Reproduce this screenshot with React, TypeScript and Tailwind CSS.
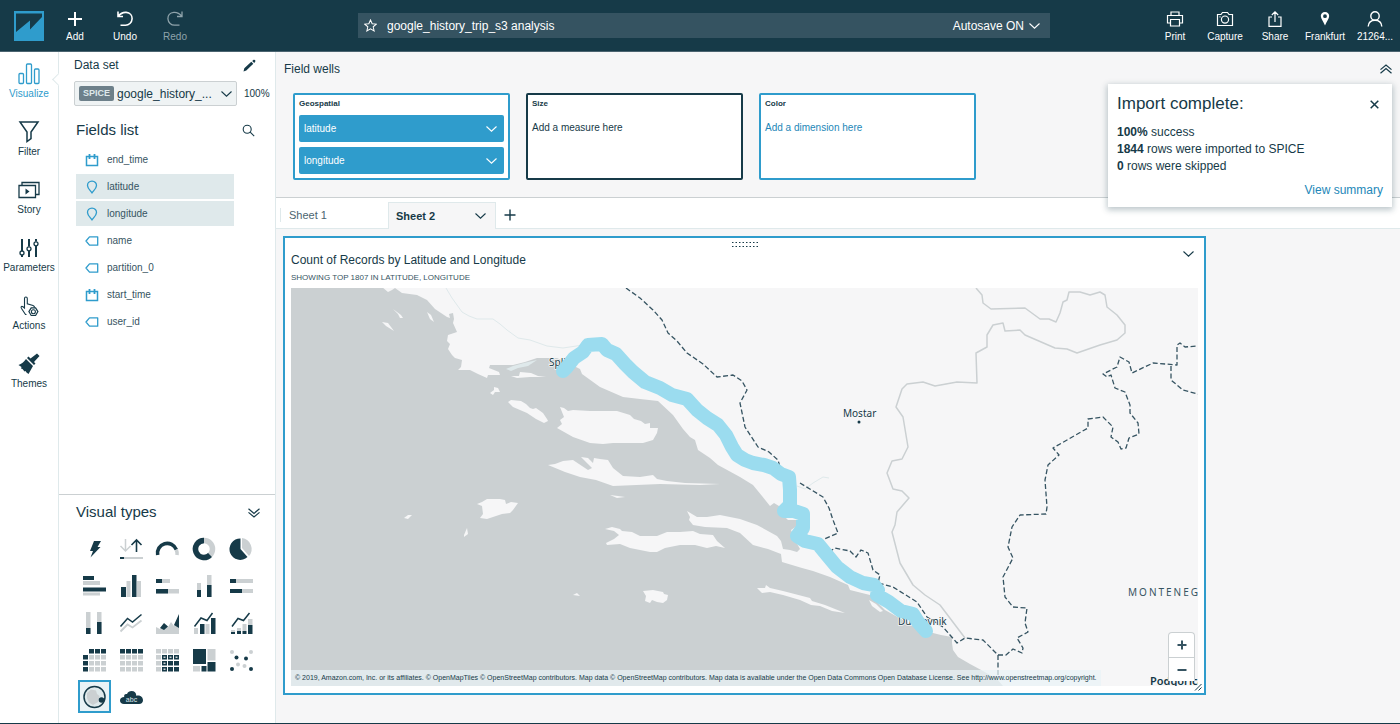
import type { ReactNode } from "react";

const DARK = "#163a48";
const LIGHT = "#cbd0d2";
const BLUE = "#2f9ccc";

type ChevronProps = { className?: string };

function Chevron({ className = "h-[6px] w-[11px]" }: ChevronProps) {
  return (
    <svg viewBox="0 0 11 6" className={className} fill="none" stroke="currentColor" strokeWidth="1.1" aria-hidden="true">
      <path d="M.5 .5 5.5 5.2 10.5 .5" />
    </svg>
  );
}

function DoubleChevron({ className = "" }: ChevronProps) {
  return (
    <svg viewBox="0 0 12 10" className={`h-[10px] w-[12px] ${className}`} fill="none" stroke="currentColor" strokeWidth="1.2" aria-hidden="true">
      <path d="M.5 .8 6 5.4 11.5 .8M.5 4.4 6 9 11.5 4.4" />
    </svg>
  );
}

/* ---------- header ---------- */

type HeaderButtonProps = { label: string; muted?: boolean; children: ReactNode };

function HeaderButton({ label, muted = false, children }: HeaderButtonProps) {
  return (
    <button
      type="button"
      className={`flex h-full w-[50px] flex-col items-center justify-center gap-[2px] pt-[3px] text-[10px] leading-[14px] ${muted ? "text-[#8fa3ab]" : "text-white"}`}
    >
      <svg viewBox="0 0 18 18" className="h-[18px] w-[18px]" fill="none" stroke="currentColor" strokeWidth="1.2" aria-hidden="true">
        {children}
      </svg>
      {label}
    </button>
  );
}

function Header() {
  return (
    <header className="grid h-[52px] shrink-0 grid-cols-[minmax(0,1fr)_692px_350px] items-center border-b border-[#4b6470] bg-[#163a48] text-white">
      <div className="flex h-full items-center">
        <svg viewBox="0 0 30 30" className="ml-[14px] mr-[6px] h-[30px] w-[30px]" role="img" aria-label="QuickSight">
          <rect width="30" height="30" fill={BLUE} />
          <path d="M2 2.5H28V6L16 18.5V9.5L2 21Z" fill={DARK} />
        </svg>
        <HeaderButton label="Add">
          <path d="M9 2V16M2 9H16" strokeWidth="2" />
        </HeaderButton>
        <HeaderButton label="Undo">
          <path d="M2 1.500V6.500H7M2.300 6.200C4.800 3 7.500 2.200 10.200 2.400C14 2.700 16.300 5.500 16.100 8.800C15.900 12.800 12.700 15.200 9.500 15.200H4.500" strokeWidth="1.600" />
        </HeaderButton>
        <HeaderButton label="Redo" muted>
          <path d="M16 1.500V6.500H11M15.700 6.200C13.200 3 10.500 2.200 7.800 2.400C4 2.700 1.700 5.500 1.900 8.800C2.100 12.800 5.300 15.200 8.500 15.200H13.500" strokeWidth="1.300" />
        </HeaderButton>
      </div>

      <div className="flex h-[25px] items-center bg-[#355361] px-[6px] text-[12px]">
        <button type="button" aria-label="Favorite">
          <svg viewBox="0 0 14 14" className="h-[13px] w-[13px]" fill="none" stroke="currentColor" strokeWidth="1.1" aria-hidden="true">
            <path d="M7 1 8.8 5.1 13.2 5.5 9.9 8.4 10.9 12.8 7 10.5 3.1 12.8 4.1 8.4 .8 5.5 5.2 5.1Z" />
          </svg>
        </button>
        <h1 className="ml-[10px] flex-1 truncate">google_history_trip_s3 analysis</h1>
        <button type="button" className="mr-[4px] flex items-center gap-[5px]">
          Autosave ON
          <Chevron />
        </button>
      </div>

      <div className="flex h-full justify-end">
        <HeaderButton label="Print">
          <path d="M5 5V2H13V5M4 13H1.5V5.5H16.5V13H14M4.5 9.5H13.5V16H4.5Z" />
        </HeaderButton>
        <HeaderButton label="Capture">
          <path d="M1.5 4.5H5L6.5 2.5H11.5L13 4.5H16.5V15.5H1.5Z" />
          <circle cx="9" cy="9.6" r="3.6" />
          <path d="M3.5 6.8H4.5" />
        </HeaderButton>
        <HeaderButton label="Share">
          <path d="M6 7H3V16.3H15V7H12M9 12V2M5.8 5 9 1.8 12.2 5" />
        </HeaderButton>
        <HeaderButton label="Frankfurt">
          <path d="M9 2C6.4 2 4.8 3.8 4.8 6C4.8 8.5 7.5 11.5 9 15.6C10.500 11.5 13.200 8.5 13.200 6C13.200 3.800 11.600 2 9 2ZM9 4.300A1.900 1.900 0 1 1 9 8.100A1.900 1.900 0 1 1 9 4.300Z" fill="currentColor" fillRule="evenodd" stroke="none" />
        </HeaderButton>
        <HeaderButton label="21264...">
          <circle cx="9" cy="6" r="4.200" strokeWidth="1.4" />
          <path d="M2.200 16.500C2.500 12.500 5 10.300 9 10.300S15.500 12.500 15.800 16.500" strokeWidth="1.4" />
        </HeaderButton>
      </div>
    </header>
  );
}

/* ---------- navigation rail ---------- */

const NAV: { label: string; icon: ReactNode }[] = [
  {
    label: "Visualize",
    icon: (
      <>
        <rect x="2" y="11.500" width="4.500" height="10" rx="1" />
        <rect x="9.500" y="2" width="5" height="19.500" rx="1" />
        <rect x="17.500" y="7" width="4.500" height="14.500" rx="1" />
      </>
    ),
  },
  { label: "Filter", icon: <path d="M3 2H21L14 12V18.500L10 21.500V12Z" strokeWidth="1.5" /> },
  {
    label: "Story",
    icon: (
      <>
        <path d="M2 7.500H18.500V19.500H2ZM5 7V4.500H22V16.500H19" />
        <path d="M8.500 10.500 12.500 13.500 8.500 16.500Z" fill="currentColor" stroke="none" />
      </>
    ),
  },
  {
    label: "Parameters",
    icon: (
      <>
        <path d="M5 3V15M5 19V21M12 3V10.500M12 15V21M19 3V5.500M19 10V21" strokeWidth="2" />
        <circle cx="5" cy="17" r="2" />
        <circle cx="12" cy="12.800" r="2" />
        <circle cx="19" cy="7.800" r="2" />
      </>
    ),
  },
  {
    label: "Actions",
    icon: (
      <>
        <path d="M9.500 20.500H8.500L4.500 14.500C3.500 12.900 4.500 11.800 6 12.800L7.500 14V4.500C7.500 2.500 10.300 2.500 10.300 4.500V9.800L16 11.500C17.200 12 17.600 12.500 17.600 13.500" strokeWidth="1.100" />
        <path d="M14.200 13.900H18.600L20.900 17.600 18.600 21.500H14.200L11.900 17.600Z" strokeWidth="1.200" />
        <circle cx="16.400" cy="17.700" r="2" strokeWidth="1.100" />
      </>
    ),
  },
  {
    label: "Themes",
    icon: (
      <g fill="currentColor" stroke="none">
        <path d="M20 1.500 22.500 4 17 10 18.500 11.500 17 13 10 6 11.500 4.500 13.500 6.500Z" />
        <path d="M9 7 16 14C14.500 16.500 13 19.500 11.500 22L9.500 20.500 8.500 19 7.500 19.500 5.500 17 4 16.500 4.500 15 1.500 13C4.500 11.800 7 10 9 7Z" />
      </g>
    ),
  },
];

function NavRail() {
  return (
    <nav className="flex w-[59px] shrink-0 flex-col border-r border-[#dfe9eb] bg-white pt-[6px]">
      {NAV.map((item, index) => (
        <button
          key={item.label}
          type="button"
          className={`relative flex h-[58px] flex-col items-center pt-[4px] text-[10px] leading-[14px] ${index === 0 ? "text-[#2f9ccc]" : "text-[#163a48]"}`}
        >
          <svg viewBox="0 0 24 24" className="mb-[1px] h-[24px] w-[24px]" fill="none" stroke="currentColor" strokeWidth="1.300" aria-hidden="true">
            {item.icon}
          </svg>
          {item.label}
          {index === 0 && (
            <span className="absolute -right-[5px] top-[17px] h-[9px] w-[9px] rotate-45 border-b border-l border-[#dfe9eb] bg-white" />
          )}
        </button>
      ))}
    </nav>
  );
}

/* ---------- data panel ---------- */

type FieldKind = "date" | "geo" | "text";

const FIELDS: { name: string; kind: FieldKind }[] = [
  { name: "end_time", kind: "date" },
  { name: "latitude", kind: "geo" },
  { name: "longitude", kind: "geo" },
  { name: "name", kind: "text" },
  { name: "partition_0", kind: "text" },
  { name: "start_time", kind: "date" },
  { name: "user_id", kind: "text" },
];

function FieldIcon({ kind }: { kind: FieldKind }) {
  return (
    <svg viewBox="0 0 14 14" className="h-[14px] w-[14px]" fill="none" stroke={BLUE} strokeWidth="1.300" aria-hidden="true">
      {kind === "date" && (
        <>
          <path d="M1.500 3.500H12.500V12.500H1.500Z" strokeWidth="1.500" />
          <path d="M4.500 1V6M9.500 1V6" strokeWidth="1.800" />
        </>
      )}
      {kind === "geo" && <path d="M7 1.200C4 1.200 2.500 3.300 2.500 5.400C2.500 8 4.600 9.600 7 12.800C9.400 9.600 11.500 8 11.500 5.400C11.500 3.300 10 1.200 7 1.200Z" />}
      {kind === "text" && <path d="M4.500 2.800H12.700V11.200H4.500L1 7Z" strokeLinejoin="round" />}
    </svg>
  );
}

type Block = [x: number, y: number, w: number, h: number, dark?: boolean];

function Blocks({ items }: { items: Block[] }) {
  return (
    <>
      {items.map(([x, y, w, h, dark], i) => (
        <rect key={i} x={x} y={y} width={w} height={h} fill={dark ? DARK : LIGHT} />
      ))}
    </>
  );
}

function Matrix({ isDark }: { isDark: (row: number, col: number) => boolean | null }) {
  const cells: Block[] = [];
  for (let row = 0; row < 4; row++) {
    for (let col = 0; col < 4; col++) {
      const dark = isDark(row, col);
      if (dark !== null) cells.push([1 + col * 6, 1 + row * 6, 5, 4.500, dark]);
    }
  }
  return <Blocks items={cells} />;
}

const VISUALS: { name: string; icon: ReactNode }[] = [
  { name: "AutoGraph", icon: <path d="M12 4H19L15.500 10H18.500L8.500 20.500 11 14H8Z" fill={DARK} /> },
  {
    name: "KPI",
    icon: (
      <>
        <path d="M6.500 2V14M1.500 9 6.500 14 11.500 9" stroke={LIGHT} strokeWidth="1.500" fill="none" />
        <path d="M17.500 15V3M12.500 8 17.500 3 22.500 8" stroke={DARK} strokeWidth="1.600" fill="none" />
        <Blocks items={[[1, 20, 23, 2], [1, 20, 4, 2, true]]} />
      </>
    ),
  },
  {
    name: "Gauge",
    icon: (
      <g fill="none" strokeWidth="3.600">
        <path d="M2.700 18A9.700 9.700 0 0 1 21.300 12.700" stroke={DARK} />
        <path d="M21.300 12.700A9.700 9.700 0 0 1 22 18" stroke={LIGHT} />
      </g>
    ),
  },
  {
    name: "Donut chart",
    icon: (
      <g fill="none" strokeWidth="5.500">
        <circle cx="12" cy="12" r="8.500" stroke={LIGHT} />
        <path d="M12 3.500A8.500 8.500 0 1 0 18 18" stroke={DARK} />
      </g>
    ),
  },
  {
    name: "Pie chart",
    icon: (
      <>
        <path d="M13 11V1A11 11 0 0 1 20 19Z" fill={LIGHT} />
        <path d="M11.500 1.500A10.700 10.700 0 1 0 18.500 20L11.500 12Z" fill={DARK} />
      </>
    ),
  },
  { name: "Horizontal bar", icon: <Blocks items={[[1, 2, 11, 4, true], [1, 7, 17, 4], [1, 13.500, 23, 4, true], [1, 18.500, 17, 3]]} /> },
  { name: "Vertical bar", icon: <Blocks items={[[2, 13, 5, 10, true], [7.500, 7, 4, 16], [13, 1, 4.500, 22, true], [18, 7, 4, 16]]} /> },
  { name: "Stacked horizontal", icon: <Blocks items={[[1, 5, 14, 4], [1, 5, 6, 4, true], [1, 15, 23, 4.500], [1, 15, 12, 4.500, true]]} /> },
  { name: "Stacked vertical", icon: <Blocks items={[[5, 9, 4, 14], [5, 16, 4, 7, true], [15, 1, 4.500, 22], [15, 11, 4.500, 12, true]]} /> },
  { name: "Full horizontal", icon: <Blocks items={[[1, 5, 23, 4], [1, 5, 6, 4, true], [1, 15, 23, 4], [1, 15, 12, 4, true]]} /> },
  { name: "Full vertical", icon: <Blocks items={[[4, 1, 4.500, 22], [4, 17, 4.500, 6, true], [15, 1, 4.500, 22], [15, 11, 4.500, 12, true]]} /> },
  {
    name: "Line chart",
    icon: (
      <g fill="none" strokeWidth="1.500">
        <path d="M1.500 20.500 8.500 13.500 13.500 16.500 22.500 9.500" stroke={LIGHT} strokeWidth="1.800" />
        <path d="M1.500 15.500 8.500 7.500 13.500 11 22.500 3.500" stroke={DARK} />
      </g>
    ),
  },
  {
    name: "Area chart",
    icon: (
      <>
        <path d="M1 23V16L5 18 9 14 13 16 16 11 19 15 24 5V23Z" fill={LIGHT} />
        <path d="M5 17 9 12 13 15.500 9 19ZM19 14 24 3V17Z" fill={DARK} />
      </>
    ),
  },
  {
    name: "Clustered combo",
    icon: (
      <>
        <Blocks items={[[2, 17, 4, 6], [8, 13, 4.500, 10, true], [13.500, 13, 4, 10], [19, 7, 4.500, 16, true]]} />
        <path d="M2.500 15.500 9 7 15 9.500 20.500 2" stroke={DARK} strokeWidth="1.500" fill="none" />
      </>
    ),
  },
  {
    name: "Stacked combo",
    icon: (
      <>
        <Blocks items={[[2, 19, 4, 2], [2, 21, 4, 2, true], [8, 17, 4, 3], [8, 20, 4, 3, true], [13.500, 13, 4, 7], [13.500, 20, 4, 3, true], [19, 8, 4.500, 6], [19, 14, 4.500, 9, true]]} />
        <path d="M3 15.500 9 7.500 14.500 9.500 20.500 2" stroke={DARK} strokeWidth="1.500" fill="none" />
      </>
    ),
  },
  { name: "Pivot table", icon: <Matrix isDark={(r, c) => (r === 0 && c === 0 ? null : r === 0 || c === 0)} /> },
  { name: "Table", icon: <Matrix isDark={(r) => r === 0} /> },
  {
    name: "Heat map",
    icon: (
      <>
        <Matrix isDark={(r, c) => r > 0 && c > 0} />
        {[[7, 7], [13, 7], [19, 7], [7, 13], [7, 19]].map(([x, y]) => (
          <rect key={`${x}-${y}`} x={x + 1.500} y={y + 1.500} width="2" height="1.500" fill={LIGHT} />
        ))}
      </>
    ),
  },
  { name: "Tree map", icon: <Blocks items={[[1, 1, 13, 15, true], [15.500, 1, 8, 11.500], [15.500, 14, 8, 9.500, true], [1, 18, 7, 5.500], [9.500, 18, 5, 5.500, true]]} /> },
  {
    name: "Scatter plot",
    icon: (
      <>
        {[[3, 4], [22, 4], [9, 16.500], [15.500, 18]].map(([x, y]) => (
          <circle key={`${x}-${y}`} cx={x} cy={y} r="2" fill={LIGHT} />
        ))}
        {[[7.500, 9.500], [17, 10.500], [3, 21], [22, 21]].map(([x, y]) => (
          <circle key={`${x}-${y}`} cx={x} cy={y} r="2" fill={DARK} />
        ))}
      </>
    ),
  },
  {
    name: "Points on map",
    icon: (
      <>
        <circle cx="12.500" cy="12" r="10.500" fill="#dfe9eb" stroke={DARK} strokeWidth="1.500" />
        <path d="M5 8 9 4.500 14 5.500 15 9 17.500 11 16 17 11 20 7 17.500 5 13Z" fill={LIGHT} />
        <circle cx="19.500" cy="15" r="2.800" fill={DARK} />
      </>
    ),
  },
  {
    name: "Word cloud",
    icon: (
      <>
        <path d="M5 19C2.500 19 1 17.500 1 15.500C1 13.300 2.800 12 5.200 12C4.800 9.600 6 8.500 8 9C9 6.800 10.500 6 12.500 6C15.500 6 17.300 7.800 17.300 10.800C21 9.500 24 12 24 15.200C24 17.500 22.500 19 20 19Z" fill={DARK} />
        <text x="12.500" y="17" textAnchor="middle" fontSize="7" fill="#dfe9eb">
          abc
        </text>
      </>
    ),
  },
];

function DataPanel() {
  return (
    <aside className="flex w-[217px] shrink-0 flex-col border-r border-[#dfe9eb] bg-white">
      <div className="flex h-[26px] items-center justify-between pl-[15px] pr-[19px] text-[12px]">
        <label htmlFor="dataset">Data set</label>
        <button type="button" aria-label="Edit data set">
          <svg viewBox="0 0 13 13" className="h-[13px] w-[13px]" fill={DARK} aria-hidden="true">
            <path d="M.5 12.500 1.300 9.200 8.300 2.800 10.300 4.800 3.300 11.600ZM9.200 2 10.600 .800Q11.300 .400 12 1.100Q12.600 1.900 12.200 2.700L11.200 4Z" />
          </svg>
        </button>
      </div>

      <div className="mt-[3px] flex items-center pl-[15px]">
        <div className="relative flex h-[25px] w-[163px] items-center rounded-xs border border-[#cbd0d2] bg-[#eff3f4] pl-[4px]">
          <span className="flex h-[15px] w-[35px] items-center justify-center rounded-xs bg-[#6d808a] text-[9px] font-bold text-[#dfe9eb]">SPICE</span>
          <select id="dataset" className="ml-[3px] min-w-0 flex-1 appearance-none bg-transparent text-[12px] outline-none">
            <option>google_history_...</option>
          </select>
          <Chevron className="pointer-events-none absolute right-[4px] top-[9px] h-[6px] w-[11px]" />
        </div>
        <span className="ml-[7px] text-[10px]">100%</span>
      </div>

      <div className="mt-[14px] flex h-[20px] items-center justify-between pl-[17px] pr-[20px]">
        <h2 className="text-[15px]">Fields list</h2>
        <button type="button" aria-label="Search fields">
          <svg viewBox="0 0 13 13" className="h-[13px] w-[13px]" fill="none" stroke={DARK} strokeWidth="1.100" aria-hidden="true">
            <circle cx="5.200" cy="5.200" r="4" />
            <path d="M8.200 8.200 12.200 12.200" />
          </svg>
        </button>
      </div>

      <ul className="mb-[8px] ml-[17px] mr-[41px] mt-[7px] flex flex-col gap-[2px] text-[10px]">
        {FIELDS.map((field) => (
          <li key={field.name}>
            <button
              type="button"
              className={`flex h-[25px] w-full items-center gap-[8px] pl-[9px] text-[#365462] ${field.kind === "geo" ? "bg-[#dfe9eb]" : ""}`}
            >
              <FieldIcon kind={field.kind} />
              {field.name}
            </button>
          </li>
        ))}
      </ul>

      <section className="mt-auto border-t border-[#cbd0d2] pb-[8px] pl-[17px] pr-[15px]">
        <div className="flex h-[35px] items-center justify-between">
          <h2 className="text-[15px]">Visual types</h2>
          <button type="button" aria-label="Collapse visual types">
            <DoubleChevron />
          </button>
        </div>
        <div className="grid auto-rows-[37px] grid-cols-5 place-items-center">
          {VISUALS.map((visual) => (
            <button
              key={visual.name}
              type="button"
              aria-label={visual.name}
              className={`flex h-[33px] w-[33px] items-center justify-center ${visual.name === "Points on map" ? "border-2 border-[#2f9ccc] bg-[#eaf3f6]" : ""}`}
            >
              <svg viewBox="0 0 25 24" className="h-[24px] w-[25px]" aria-hidden="true">
                {visual.icon}
              </svg>
            </button>
          ))}
        </div>
      </section>
    </aside>
  );
}

/* ---------- field wells and sheets ---------- */

type WellProps = { title: string; border: string; children: ReactNode };

function Well({ title, border, children }: WellProps) {
  return (
    <div className={`h-[87px] w-[217px] rounded-xs border-2 bg-white px-[4px] pt-[4px] ${border}`}>
      <h3 className="text-[8px] font-bold leading-[10px]">{title}</h3>
      {children}
    </div>
  );
}

function FieldWells() {
  return (
    <section className="border-b border-[#cbd0d2] pb-[17px]">
      <div className="flex h-[34px] items-center justify-between pl-[8px] pr-[8px]">
        <h2 className="text-[12px]">Field wells</h2>
        <button type="button" aria-label="Collapse field wells">
          <DoubleChevron className="rotate-180" />
        </button>
      </div>
      <div className="mt-[7px] flex gap-[16px] pl-[17px]">
        <Well title="Geospatial" border="border-[#2f9ccc]">
          <div className="mt-[6px] flex flex-col gap-[5px]">
            {["latitude", "longitude"].map((name) => (
              <button key={name} type="button" className="flex h-[27px] items-center justify-between rounded-xs bg-[#2f9ccc] pl-[5px] pr-[7px] text-[10px] text-white">
                {name}
                <Chevron />
              </button>
            ))}
          </div>
        </Well>
        <Well title="Size" border="border-[#163a48]">
          <p className="mt-[12px] text-[10px] leading-[14px]">Add a measure here</p>
        </Well>
        <Well title="Color" border="border-[#2f9ccc]">
          <p className="mt-[12px] text-[10px] leading-[14px] text-[#2387b8]">Add a dimension here</p>
        </Well>
      </div>
    </section>
  );
}

function SheetTabs() {
  return (
    <div className="flex h-[31px] items-end border-b border-[#dfe9eb] bg-white pl-[4px] text-[11px]">
      <button type="button" className="flex h-[26px] w-[108px] items-center text-[#4b6470]">
        <span className="flex h-[14px] items-center border-l border-[#dfe9eb] pl-[8px]">Sheet 1</span>
      </button>
      <button type="button" className="-mb-px flex h-[27px] w-[108px] items-center justify-between border border-b-0 border-[#dfe9eb] bg-[#f6f6f7] pl-[7px] pr-[9px] font-bold">
        Sheet 2
        <Chevron />
      </button>
      <button type="button" aria-label="Add sheet" className="ml-[1px] flex h-[26px] w-[26px] items-center justify-center">
        <svg viewBox="0 0 12 12" className="h-[12px] w-[12px]" stroke={DARK} strokeWidth="1.400" aria-hidden="true">
          <path d="M6 .5V11.500M.5 6H11.500" />
        </svg>
      </button>
    </div>
  );
}

/* ---------- map ---------- */

const LAND =
  "M382 287 388 292 392 290 395 288 402 293 417 295 427 300 435 309 441 313 447 317 450 318 449 314 453 313 454 319 453 323 457 332 448 335 447 341 450 344 448 349 452 355 455 358 462 360 461 367 458 370 470 370 478 374 487 378 488 375 500 375 499 372 489 368 490 365 513 365 525 362 537 358 557 358 570 364 580 369 582 374 600 387 623 397 640 399 658 401 673 415 683 429 690 437 695 440 698 450 704 454 710 458 718 465 740 477 753 485 762 496 770 506 774 503 779 506 781 513 788 520 797 520 797 526 791 530 795 540 800 549 797 552 790 550 783 549 781 541 777 536 757 525 740 519 720 515 707 517 697 517 687 511 690 517 689 520 693 525 705 527 727 528 740 533 753 545 768 549 781 554 782 562 802 568 813 571 830 577 848 585 850 590 870 595 885 610 903 620 915 627 933 633 941 635 952 637 952 643 953 650 958 657 970 664 983 671 997 679 1003 686 1198 686 1198 288Z";

const ISLANDS = [
  "M560 407 564 408 568 411 573 410 590 411 617 411 630 415 634 419 641 421 645 424 650 423 650 428 658 428 657 433 653 440 643 443 613 443 603 444 590 443 573 437 557 428 562 424 560 420 564 417Z",
  "M548 465 555 464 563 461 573 460 582 466 588 470 592 468 588 464 581 457 588 458 593 463 594 458 600 459 608 460 613 468 623 476 640 477 653 475 657 479 667 481 685 483 720 484 700 485 660 484 613 486 596 480 580 477 565 472Z",
  "M508 402 511 400 521 401 526 404 530 408 533 409 536 408 543 413 547 419 548 421 544 423 536 419 527 413 513 407Z",
  "M490 393 494 390 494 387 498 388 500 392 495 392 493 395Z",
  "M511 376 519 376 520 372 531 373 538 376 546 377 530 377 517 378Z",
  "M477 504 482 502 487 499 500 499 505 500 506 504 511 502 518 503 513 510 510 513 502 514 487 519 480 518 483 514 482 506Z",
  "M605 529 612 527 620 529 622 531 632 532 640 536 657 536 667 532 680 532 693 531 700 534 713 535 717 541 725 548 716 546 707 548 695 545 680 545 665 548 657 552 650 552 640 550 630 548 620 544 607 545 606 543 614 539 619 535 614 531Z",
  "M643 591 653 590 663 592 664 594 668 595 667 600 663 603 657 602 652 600 650 603 645 601 646 596Z",
  "M757 588 765 588 766 585 770 588 783 591 810 598 812 601 825 605 845 613 832 611 820 606 811 605 800 600 783 595 770 592 762 593Z",
  "M393 309 398 314 400 318 403 318 401 315Z",
  "M382 322 388 323 394 331 386 326Z",
  "M427 312 431 315 434 322 430 319Z",
  "M610 495 618 496 625 497 617 498Z",
  "M404 518 408 515 412 515 408 519Z",
  "M464 535 467 528 468 534 464 537Z",
  "M573 595 577 593 580 596Z",
  "M869 600 876 604 883 611 880 612 872 606Z",
];

const ROADS =
  "M976 288 982 295 983 303 991 309 1025 308 1040 319 1049 319 1056 322 1060 313 1063 302 1067 300 1069 292 1080 292 1090 295 1100 292 1105 295 1107 307 1117 315 1125 325 1125 333 1117 340 1100 345 1077 353 1067 349 1055 348 1025 335 1020 330 1005 331 1003 323 993 325 987 335 987 347 976 353 977 383 957 382 935 386 923 382 907 384 902 389 896 407 903 417 908 447 902 459 892 461 887 473 893 489 902 491 909 498 897 512 895 525 892 532 900 563 913 585 925 595 940 605 965 638";

const BORDERS = [
  "M626 288 640 298 653 310 662 320 668 333 677 341 687 353 703 364 717 377 733 375 742 381 747 390 740 403 745 427 758 447 769 452 778 460 780 467",
  "M800 483 823 497 829 508 833 520 838 533 820 541",
  "M829 552 835 548 850 551 856 557 861 550 868 553 873 570 880 575 878 583 893 587 917 602 927 617 943 627 957 643 965 638 983 640 998 655 998 675",
  "M998 655 1006 655 1013 649 1022 653 1023 648 1017 638 1028 632 1025 623 1027 608 1013 607 1005 597 1003 577 1013 558 1008 547 1012 527 1020 515 1046 514 1047 507 1045 480 1048 465 1059 455 1053 448 1088 428 1088 419 1103 417 1113 427 1111 437 1118 442 1121 449 1126 448 1129 438 1139 434 1138 423 1130 413 1130 405 1125 392 1115 388 1111 375 1107 377 1103 374 1117 367 1120 357 1129 362 1132 373 1153 363 1177 365 1177 345 1180 343 1185 347 1198 346",
  "M1171 366 1171 380 1183 390 1198 394",
];

const ROUTE =
  "M563 371 567 367 574 358 583 352 588 345 602 344 607 350 616 354 625 364 633 372 645 382 660 388 672 395 687 399 697 410 707 418 718 425 726 435 732 447 737 455 745 460 753 463 764 465 773 468 781 474 789 477 790 490 790 505 784 511 794 511 803 514 803 528 797 536 805 541 818 544 827 555 837 567 850 577 863 583 874 585 878 590 877 595 889 602 901 611 913 614 918 622 926 631";

function PointsMap() {
  return (
    <div className="relative h-[398px] w-full overflow-hidden">
      <svg viewBox="291 288 907 398" preserveAspectRatio="xMidYMid slice" className="h-full w-full" role="img" aria-label="Points along the Adriatic coast">
        <rect x="291" y="288" width="907" height="398" fill="#cbd0d2" />
        <path d={LAND} fill="#f6f6f7" />
        {ISLANDS.map((d) => (
          <path key={d} d={d} fill="#f6f6f7" />
        ))}
        <path d="M506 369 513 366 524 363 537 360 528 366 518 368 511 371Z" fill="#dfe9eb" />
        <g fill="none" strokeLinejoin="round">
          <path d="M446 288 452 298 457 305 462 312 469 316 477 319 493 319 500 324 507 330 518 338 530 340 547 346 563 348 583 345M797 486 805 489 813 483 823 477 829 478" stroke="#dfe9eb" strokeWidth="1" />
          <path d={ROADS} stroke="#cbd0d2" strokeWidth="1.500" />
          {BORDERS.map((d) => (
            <path key={d} d={d} stroke="#365462" strokeWidth="1.300" strokeDasharray="5 2.500" />
          ))}
        </g>
        <g fill={DARK} stroke="#f6f6f7" strokeWidth="1.500" paintOrder="stroke" fontFamily="'Noto Sans', sans-serif" fontSize="10">
          <text x="549" y="366">Split</text>
          <text x="843" y="417">Mostar</text>
          <text x="898" y="625">Dubrovnik</text>
          <text x="1128" y="596" fill="#365462" className="tracking-[2px]">MONTENEGRO</text>
          <text x="1150" y="685" fontWeight="600" fontSize="11">Podgorica</text>
        </g>
        <circle cx="859" cy="422" r="1.500" fill={DARK} />
        <path d={ROUTE} fill="none" stroke="#9bdcef" strokeWidth="14" strokeLinecap="round" strokeLinejoin="round" />
      </svg>
      <p className="absolute bottom-0 left-0 flex h-[16px] items-center whitespace-nowrap bg-[#eaf3f6]/70 px-[4px] text-[7px]">
        © 2019, Amazon.com, Inc. or its affiliates. © OpenMapTiles © OpenStreetMap contributors. Map data © OpenStreetMap contributors. Map data is available under the Open Data Commons Open Database License. See http://www.openstreetmap.org/copyright.
      </p>
      <div className="absolute bottom-[5px] right-[3px] flex w-[27px] flex-col divide-y divide-[#cbd0d2] rounded-t border border-b-0 border-[#cbd0d2] bg-white">
        <button type="button" aria-label="Zoom in" className="flex h-[25px] items-center justify-center">
          <svg viewBox="0 0 10 10" className="h-[10px] w-[10px]" stroke="#365462" strokeWidth="2" aria-hidden="true">
            <path d="M5 .5V9.500M.5 5H9.500" />
          </svg>
        </button>
        <button type="button" aria-label="Zoom out" className="flex h-[23px] items-center justify-center">
          <svg viewBox="0 0 10 10" className="h-[10px] w-[10px]" stroke="#365462" strokeWidth="2" aria-hidden="true">
            <path d="M.5 5H9.500" />
          </svg>
        </button>
      </div>
    </div>
  );
}

function VisualTile() {
  return (
    <article className="relative w-[923px] max-w-full border-2 border-[#2f9ccc] bg-white px-[6px] pb-[7px]">
      <svg viewBox="0 0 26 5" className="absolute left-1/2 top-[4px] h-[5px] w-[26px] -translate-x-1/2" aria-hidden="true">
        <path d="M0 .5H26M0 4.500H26" stroke={DARK} strokeWidth="1" strokeDasharray="1.500 2" />
      </svg>
      <header className="flex items-start justify-between pr-[4px] pt-[13px]">
        <div>
          <h2 className="text-[12px] leading-[18px]">Count of Records by Latitude and Longitude</h2>
          <p className="mb-[1px] text-[8px] leading-[18px] text-[#365462]">SHOWING TOP 1807 IN LATITUDE, LONGITUDE</p>
        </div>
        <button type="button" aria-label="Visual menu">
          <Chevron />
        </button>
      </header>
      <PointsMap />
      <svg viewBox="0 0 8 8" className="absolute bottom-[2px] right-[2px] h-[8px] w-[8px]" stroke={DARK} strokeWidth="1" aria-hidden="true">
        <path d="M1 7.500 7.500 1M4.500 7.500 7.500 4.500" />
      </svg>
    </article>
  );
}

function ImportToast() {
  return (
    <div role="status" className="absolute right-[8px] top-[84px] w-[284px] bg-white pb-[8px] pl-[9px] pr-[9px] pt-[11px] text-[12px] leading-[17px] shadow-[0_2px_6px_1px_rgba(22,58,72,0.28)]">
      <div className="mb-[11px] flex items-center justify-between pr-[4px]">
        <h2 className="text-[17px] leading-[18px]">Import complete:</h2>
        <button type="button" aria-label="Close">
          <svg viewBox="0 0 9 9" className="h-[9px] w-[9px]" stroke={DARK} strokeWidth="1.500" aria-hidden="true">
            <path d="M.7 .7 8.300 8.300M8.300 .7 .7 8.300" />
          </svg>
        </button>
      </div>
      <p><b>100%</b> success</p>
      <p><b>1844</b> rows were imported to SPICE</p>
      <p><b>0</b> rows were skipped</p>
      <a href="#summary" className="mt-[7px] block text-right text-[#2387b8]">View summary</a>
    </div>
  );
}

export default function App() {
  return (
    <div className="relative flex min-h-screen flex-col border-b border-[#163a48] bg-[#f6f6f7] font-['Liberation_Sans',Arial,sans-serif] text-[#163a48]">
      <Header />
      <div className="flex flex-1">
        <NavRail />
        <DataPanel />
        <main className="min-w-0 flex-1">
          <FieldWells />
          <SheetTabs />
          <div className="px-[7px] py-[7px]">
            <VisualTile />
          </div>
        </main>
      </div>
      <ImportToast />
    </div>
  );
}
